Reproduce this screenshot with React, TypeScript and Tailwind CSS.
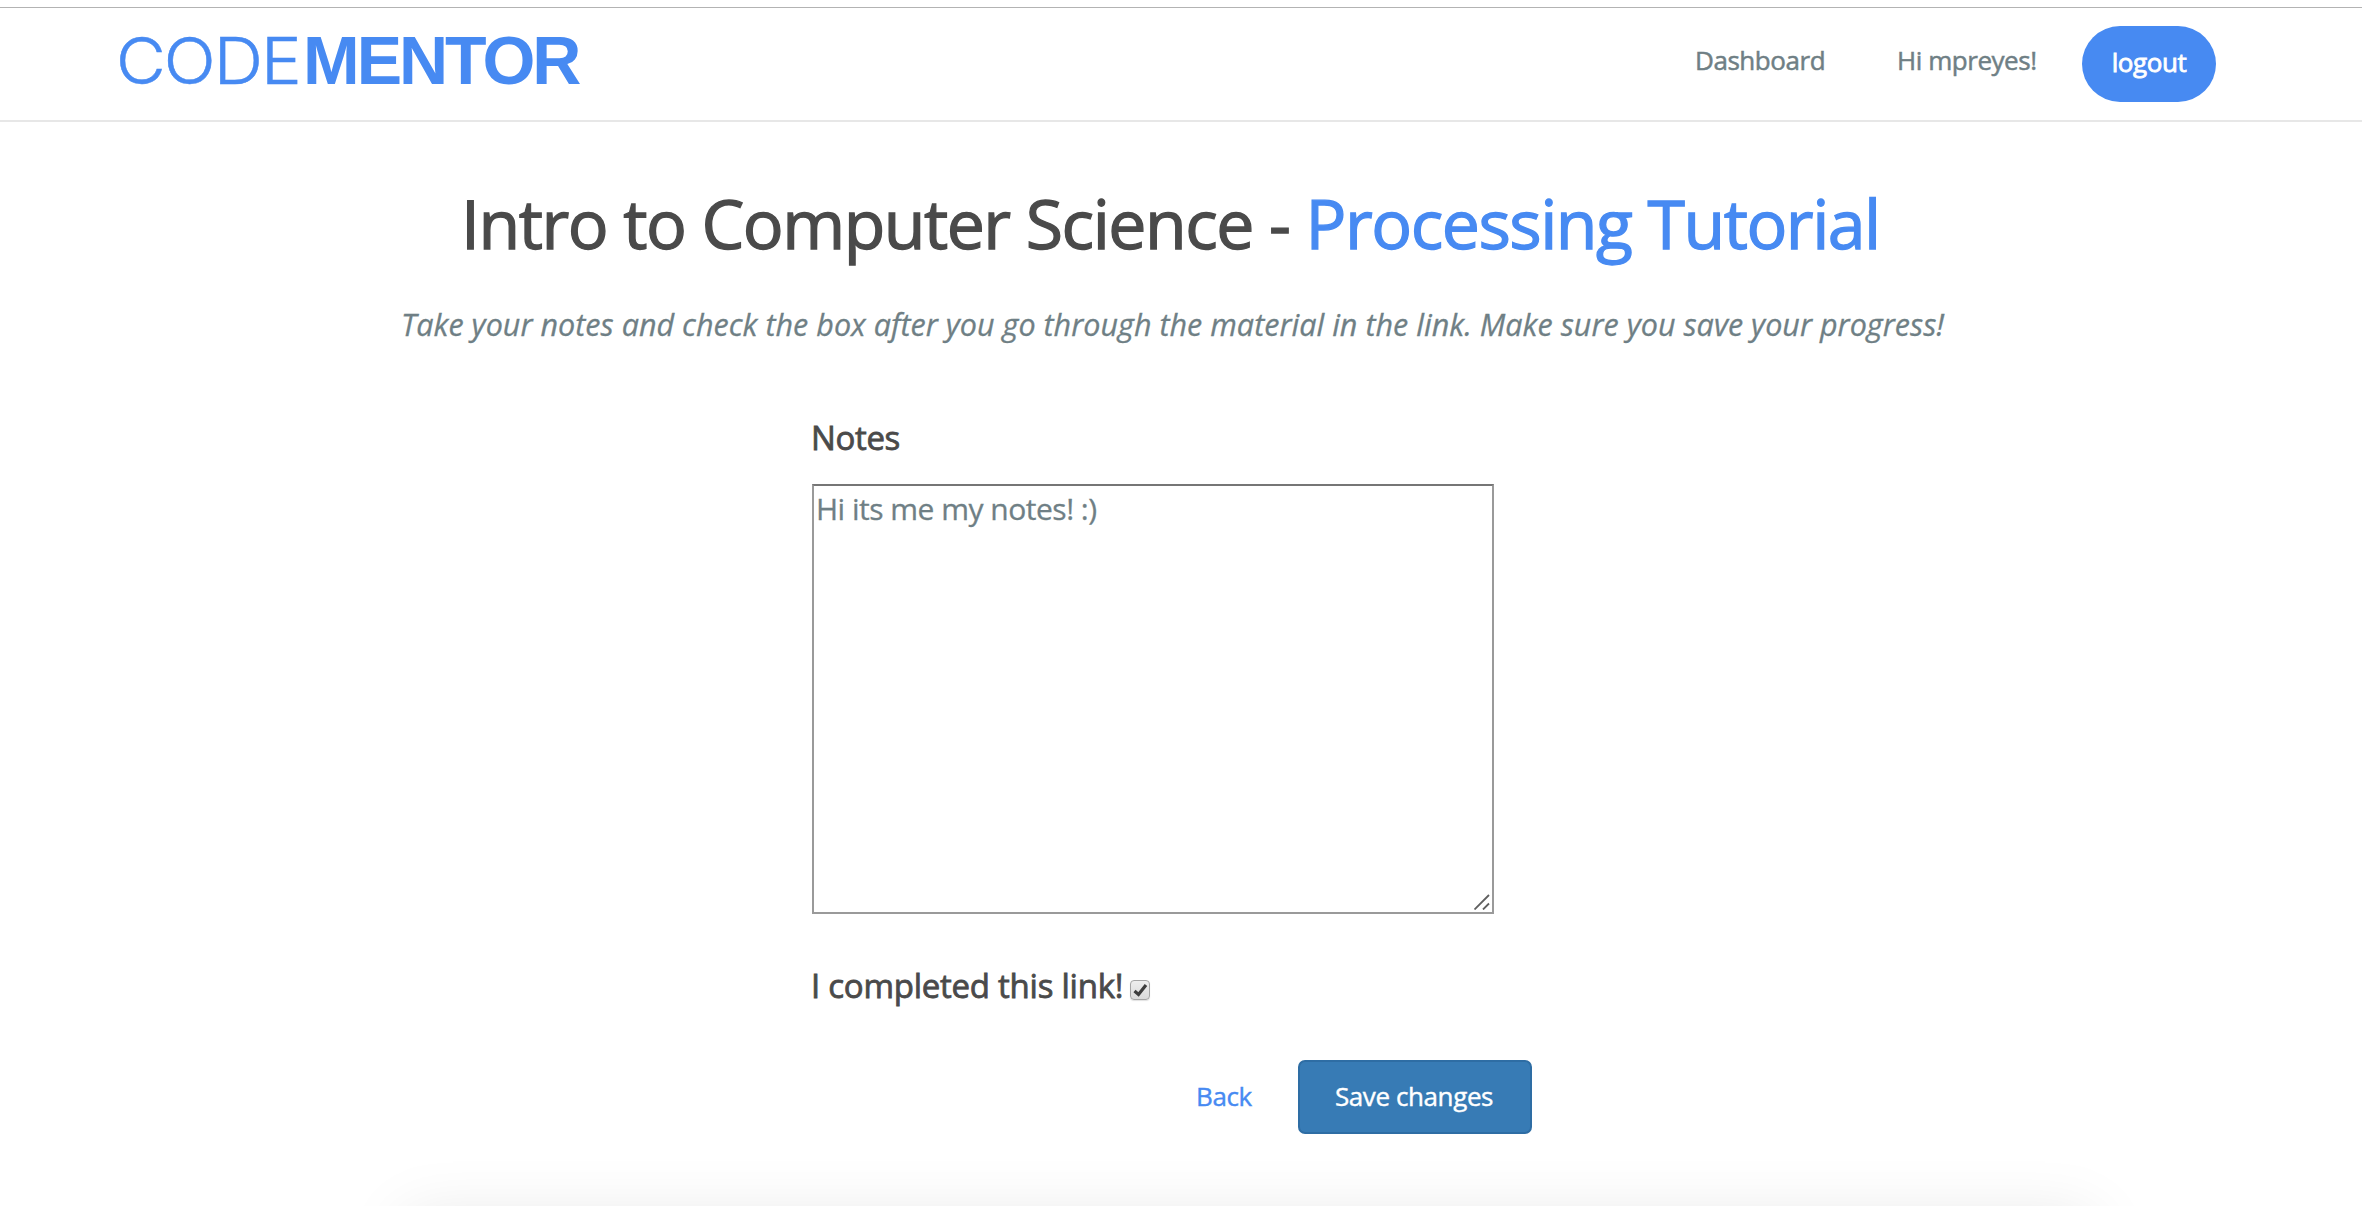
import React from "react";

function Header() {
  return (
    <header className="flex h-[115px] items-start border-t border-b-2 border-t-[#b3b3b3] border-b-[#e7e7e7] pl-[116px] text-[26px] text-[#6f7f85]">
      <a href="#" className="mt-[12px] flex w-[1579px] text-[#478af2]">
        <span className="mt-px w-[187px] origin-left scale-x-106 whitespace-nowrap font-['Inter'] text-[64.5px] font-light leading-[80px] tracking-[-1.8px] [-webkit-text-stroke:0.5px]">CODE</span>
        <span className="whitespace-nowrap font-['Liberation_Sans'] text-[68px] font-bold leading-[80px] tracking-[-3px]">MENTOR</span>
      </a>
      <nav className="flex items-start whitespace-nowrap leading-[36px] tracking-[-0.45px] [-webkit-text-stroke:0.5px]">
        <a href="#" className="mt-[34px] w-[202px]">Dashboard</a>
        <a href="#" className="mt-[34px] w-[185px]">Hi mpreyes!</a>
        <button className="mt-[18px] flex h-[76px] w-[134px] justify-center rounded-[38px] bg-[#478af2] pt-[18px] leading-[36px] tracking-[-0.45px] text-white [-webkit-text-stroke:0.8px]">
          logout
        </button>
      </nav>
    </header>
  );
}

function ResizeGrip() {
  return (
    <svg className="absolute right-1 bottom-1 h-4 w-4" viewBox="0 0 16 16" fill="none" stroke="#5f5f5f" strokeWidth="1.8">
      <path d="M0.5 15.5 15 1M9 15.5 15 9.5" />
    </svg>
  );
}

function CheckBox() {
  return (
    <span className="mt-[14px] ml-[7px] flex h-5 w-5 items-center justify-center rounded-[4px] border-[1.5px] border-[#a5a5a5] bg-linear-to-b from-[#eeeeee] to-[#dadada] shadow-[0_1px_1px_rgba(0,0,0,0.12)]">
      <svg className="h-[15px] w-[15px]" viewBox="0 0 15 15" fill="none" stroke="#3d3d3d" strokeWidth="3.2">
        <path d="M1.5 8 5.5 11.5 13 2" />
      </svg>
    </span>
  );
}

export default function App() {
  return (
    <div className="relative h-[1206px] w-[2362px] overflow-hidden bg-white pt-[7px] font-['Open_Sans',sans-serif]">
      <Header />
      <main className="flex flex-col">
        <h1 className="mt-[61px] pl-[461px] text-[68px] leading-[80px] tracking-[-1.51px] whitespace-nowrap text-[#4a4a4a] [-webkit-text-stroke:1.3px]">
          Intro to Computer Science - <span className="text-[#478af2]">Processing Tutorial</span>
        </h1>
        <p className="mt-[41px] pl-[401px] text-[30.5px] leading-[40px] tracking-[0.02px] whitespace-nowrap text-[#6f7f85] italic [-webkit-text-stroke:0.3px]">
          Take your notes and check the box after you go through the material in the link. Make sure you save your progress!
        </p>
        <form className="ml-[812px] flex w-[720px] flex-col">
          <label className="-ml-px mt-[74px] text-[33px] leading-[40px] tracking-[-0.35px] text-[#4a4a4a] [-webkit-text-stroke:0.8px]">Notes</label>
          <div className="relative mt-[26px] h-[430px] w-[682px]">
            <textarea
              className="block h-full w-full resize-none border-2 border-[#9a9a9a] border-t-[#767676] px-[2px] py-[3px] text-[30px] leading-[40px] tracking-[-0.5px] text-[#6f7f85] outline-none [-webkit-text-stroke:0.3px]"
              defaultValue="Hi its me my notes! :)"
            />
            <ResizeGrip />
          </div>
          <div className="-ml-px mt-[52px] flex h-[40px] text-[33px] leading-[40px] tracking-[-0.25px] whitespace-nowrap text-[#4a4a4a]">
            <span className="[-webkit-text-stroke:0.8px]">I completed this link!</span>
            <CheckBox />
          </div>
          <div className="mt-[54px] flex items-center justify-end text-[26px] tracking-[-0.4px] [-webkit-text-stroke:0.4px]">
            <a href="#" className="w-[102px] pb-[2px] text-[#478af2]">Back</a>
            <button className="h-[74px] w-[234px] rounded-[7px] border-2 border-[#2e6da4] bg-[#377bb5] pr-[2px] pb-[2px] tracking-[-0.4px] text-white">
              Save changes
            </button>
          </div>
        </form>
      </main>
      <div className="absolute top-[1217px] left-[405px] h-[200px] w-[1688px] shadow-[0_0_60px_rgba(0,0,0,0.1)]" />
    </div>
  );
}
